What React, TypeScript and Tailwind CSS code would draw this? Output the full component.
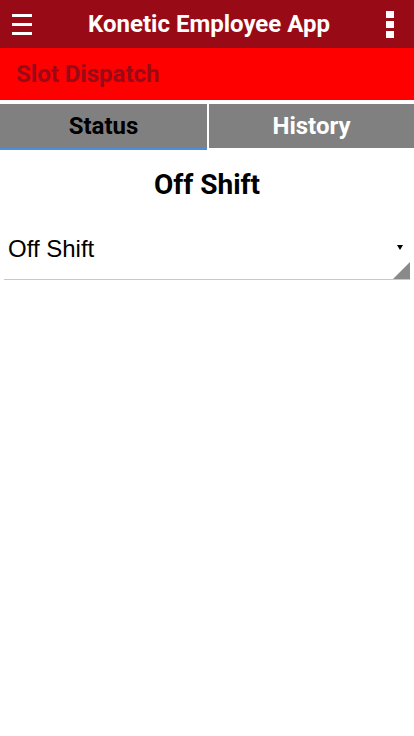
export default function App() {
  return (
    <div className="min-h-screen w-full bg-white font-['Roboto',sans-serif]">
      {/* Top bar */}
      <div className="flex h-12 items-center justify-between bg-[#990a17] px-3">
        <div className="flex w-5 flex-col gap-[6px]">
          <span className="block h-[3px] w-5 bg-white" />
          <span className="block h-[3px] w-5 bg-white" />
          <span className="block h-[3px] w-5 bg-white" />
        </div>
        <h1 className="text-[24px] font-bold text-white">Konetic Employee App</h1>
        <div className="mr-[8px] flex w-2 flex-col gap-[3px]">
          <span className="block h-[7px] w-2 bg-white" />
          <span className="block h-[7px] w-2 bg-white" />
          <span className="block h-[7px] w-2 bg-white" />
        </div>
      </div>

      {/* Section title */}
      <div className="flex h-[52px] items-center bg-[#ff0000] px-4">
        <span className="text-[24px] font-bold text-[#990a17]">Slot Dispatch</span>
      </div>

      {/* Tabs */}
      <div className="mt-1 flex gap-[2px]">
        <button className="flex h-[46px] w-[207px] items-center justify-center border-b-2 border-[#4a90d9] bg-[#808080] text-[24px] font-bold text-black">
          Status
        </button>
        <button className="flex h-[44px] flex-1 items-center justify-center bg-[#808080] text-[24px] font-bold text-white">
          History
        </button>
      </div>

      {/* Content */}
      <div className="px-1">
        <h2 className="mt-[21px] text-center text-[28px] leading-[28px] font-bold text-black">Off Shift</h2>
        <div className="relative mt-[30px] h-[51px] border-b border-[#c8c8c8] pt-[8px] pl-1">
          <span className="block font-['Liberation_Sans',Arial,sans-serif] text-[24px] leading-none text-black">
            Off Shift
          </span>
          <svg className="absolute right-[7px] top-[16px]" width="6" height="5" viewBox="0 0 6 5">
            <path d="M0 0h6L3 5z" fill="#000" />
          </svg>
          <svg className="absolute bottom-0 right-0" width="17" height="17" viewBox="0 0 17 17">
            <path d="M17 0v17H0z" fill="#8a8a8a" />
          </svg>
        </div>
      </div>
    </div>
  );
}
